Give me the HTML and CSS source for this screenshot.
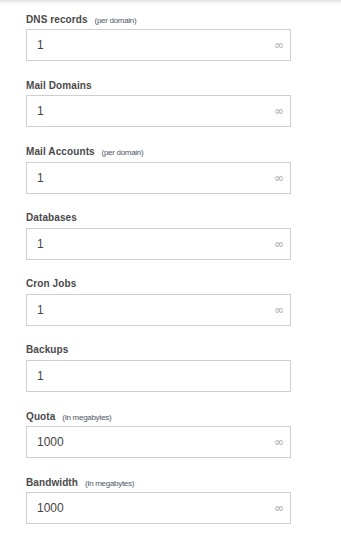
FILE: index.html
```html
<!DOCTYPE html>
<html>
<head>
<meta charset="utf-8">
<link rel="stylesheet" href="styles.css">
</head>
<body>
<div class="form">
  <div class="group">
    <label class="label">DNS records <span class="hint">(per domain)</span></label>
    <div class="field"><span class="value">1</span><span class="inf">∞</span></div>
  </div>
  <div class="group">
    <label class="label">Mail Domains</label>
    <div class="field"><span class="value">1</span><span class="inf">∞</span></div>
  </div>
  <div class="group">
    <label class="label">Mail Accounts <span class="hint">(per domain)</span></label>
    <div class="field"><span class="value">1</span><span class="inf">∞</span></div>
  </div>
  <div class="group">
    <label class="label">Databases</label>
    <div class="field"><span class="value">1</span><span class="inf">∞</span></div>
  </div>
  <div class="group">
    <label class="label">Cron Jobs</label>
    <div class="field"><span class="value">1</span><span class="inf">∞</span></div>
  </div>
  <div class="group">
    <label class="label">Backups</label>
    <div class="field"><span class="value">1</span></div>
  </div>
  <div class="group">
    <label class="label">Quota <span class="hint">(In megabytes)</span></label>
    <div class="field"><span class="value">1000</span><span class="inf">∞</span></div>
  </div>
  <div class="group">
    <label class="label">Bandwidth <span class="hint">(In megabytes)</span></label>
    <div class="field"><span class="value">1000</span><span class="inf">∞</span></div>
  </div>
</div>
</body>
</html>
```
FILE: styles.css
```css
html, body {
  margin: 0;
  padding: 0;
}
body {
  background: #fff linear-gradient(#e2e2e2, #f6f6f6 3px, #fff 6px) no-repeat;
  background-size: 100% 6px;
  font-family: "Liberation Sans", Arial, sans-serif;
  width: 341px;
  height: 543px;
  overflow: hidden;
}
.form {
  padding: 12.8px 0 0 26px;
  display: flex;
  flex-direction: column;
}
.group {
  display: flex;
  flex-direction: column;
  margin-bottom: 17.64px;
}
.label {
  display: block;
  height: 14px;
  line-height: 14px;
  margin-bottom: 2.5px;
  font-size: 10px;
  font-weight: bold;
  color: #4a4a4a;
  letter-spacing: 0.1px;
}
.hint {
  font-size: 8px;
  font-weight: normal;
  color: #4d5668;
  margin-left: 4px;
  letter-spacing: -0.3px;
}
.field {
  box-sizing: border-box;
  width: 265px;
  height: 32px;
  border: 1px solid #cfcfcf;
  display: flex;
  align-items: center;
  justify-content: space-between;
  padding: 0 6px 0 10px;
}
.value {
  font-size: 12px;
  color: #444;
}
.inf {
  font-size: 12px;
  color: #aaa;
  font-family: "DejaVu Sans", sans-serif;
  line-height: 1;
}
```
